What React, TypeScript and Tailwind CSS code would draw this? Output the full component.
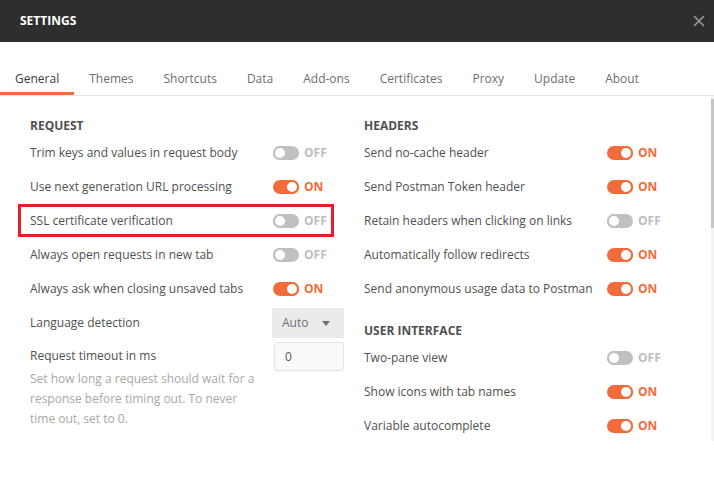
import React from "react"

type Row = { label: string; on: boolean; highlight?: boolean }

const requestRows: Row[] = [
  { label: "Trim keys and values in request body", on: false },
  { label: "Use next generation URL processing", on: true },
  { label: "SSL certificate verification", on: false, highlight: true },
  { label: "Always open requests in new tab", on: false },
  { label: "Always ask when closing unsaved tabs", on: true },
]

const headerRows: Row[] = [
  { label: "Send no-cache header", on: true },
  { label: "Send Postman Token header", on: true },
  { label: "Retain headers when clicking on links", on: false },
  { label: "Automatically follow redirects", on: true },
  { label: "Send anonymous usage data to Postman", on: true },
]

const uiRows: Row[] = [
  { label: "Two-pane view", on: false },
  { label: "Show icons with tab names", on: true },
  { label: "Variable autocomplete", on: true },
]

const tabs = ["General", "Themes", "Shortcuts", "Data", "Add-ons", "Certificates", "Proxy", "Update", "About"]

function Toggle({ on }: { on: boolean }) {
  return (
    <div className="flex items-center">
      {on ? (
        <div className="flex h-[14px] w-[26px] items-center justify-end rounded-full bg-[#f26b3a]">
          <div className="h-[14px] w-[14px] rounded-full border-2 border-[#f26b3a] bg-white" />
        </div>
      ) : (
        <div className="flex h-[14px] w-[26px] items-center justify-start rounded-full bg-[#c0c0c0]">
          <div className="h-[14px] w-[14px] rounded-full border-2 border-[#c0c0c0] bg-white" />
        </div>
      )}
      <span className={`ml-[5px] text-[12px] font-bold ${on ? "text-[#f26b3a]" : "text-[#bdbdbd]"}`}>
        {on ? "ON" : "OFF"}
      </span>
    </div>
  )
}

function SettingRow({ row }: { row: Row }) {
  return (
    <div className="relative flex h-[34px] items-center">
      <span className="w-[243px] text-[12px] text-[#505050]">{row.label}</span>
      <Toggle on={row.on} />
      {row.highlight && (
        <div className="pointer-events-none absolute -left-[12px] top-0 h-[33px] w-[316px] border-[3px] border-[#e31e24]" />
      )}
    </div>
  )
}

function Heading({ children, className = "" }: { children: React.ReactNode; className?: string }) {
  return <div className={`h-5 text-[12px] font-bold leading-5 text-[#505050] ${className}`}>{children}</div>
}

export default function App() {
  return (
    <div className="h-[479px] w-[714px] overflow-hidden bg-white font-['Open_Sans',sans-serif]">
      <div className="flex h-[42px] items-center justify-between bg-[#2e2e2e] pl-5 pr-[9px]">
        <span className="text-[12px] font-bold text-white">SETTINGS</span>
        <svg width="12" height="12" viewBox="0 0 12 12" className="mb-px">
          <path d="M1 1L11 11M11 1L1 11" stroke="#9b9b9b" strokeWidth="1.6" />
        </svg>
      </div>

      <div className="flex border-b border-[#e6e6e6] pt-[27px]">
        {tabs.map((t, i) => (
          <div
            key={t}
            className={`border-b-[3px] px-[15px] pb-[3px] text-[12px] leading-5 ${
              i === 0 ? "border-[#f26b3a] text-[#3d3d3d]" : "border-transparent text-[#6e6e6e]"
            }`}
          >
            {t}
          </div>
        ))}
      </div>

      <div className="flex h-[345px] overflow-hidden">
        <div className="flex flex-1 gap-5 pl-[30px] pt-5">
          <div className="w-[314px]">
            <Heading>REQUEST</Heading>
            {requestRows.map((r) => (
              <SettingRow key={r.label} row={r} />
            ))}
            <div className="flex h-[34px] items-center">
              <span className="w-[242px] text-[12px] text-[#505050]">Language detection</span>
              <div className="flex h-[30px] w-[72px] items-center justify-between bg-[#ebebeb] pl-[10px] pr-[14px] text-[12px] text-[#707070]">
                <span>Auto</span>
                <svg width="8" height="5" viewBox="0 0 8 5">
                  <path d="M0 0H8L4 5Z" fill="#707070" />
                </svg>
              </div>
            </div>
            <div className="flex items-start">
              <div className="w-[244px]">
                <div className="mt-[6px] text-[12px] leading-5 text-[#505050]">Request timeout in ms</div>
                <div className="mt-[3px] w-[228px] text-[12px] leading-5 text-[#a8a8a8]">
                  Set how long a request should wait for a response before timing out. To never time out, set to 0.
                </div>
              </div>
              <div className="mt-[2px] flex h-[29px] w-[70px] items-center rounded-[3px] border border-[#e3e3e3] bg-[#fafafa] pl-[10px] text-[12px] text-[#555555]">
                0
              </div>
            </div>
            <div className="mt-3 flex">
              <div className="w-[244px]" />
              <div className="h-[29px] w-[70px] rounded-[3px] border border-[#e3e3e3] bg-[#fafafa]" />
            </div>
          </div>

          <div className="flex-1">
            <Heading>HEADERS</Heading>
            {headerRows.map((r) => (
              <SettingRow key={r.label} row={r} />
            ))}
            <Heading className="mt-[15px]">USER INTERFACE</Heading>
            {uiRows.map((r) => (
              <SettingRow key={r.label} row={r} />
            ))}
          </div>
        </div>
        <div className="flex w-[3px] flex-col bg-[#f3f3f3] pt-[3px]">
          <div className="h-[129px] bg-[#c6c6c6]" />
        </div>
      </div>
    </div>
  )
}
